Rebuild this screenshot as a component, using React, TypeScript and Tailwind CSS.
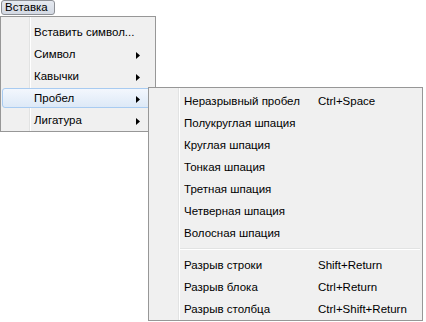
import React from "react";

const font = { fontFamily: '"Liberation Sans", Arial, sans-serif' };

function Arrow() {
  return (
    <svg width="4" height="7" viewBox="0 0 4 7" className="block">
      <path d="M0 0 L4 3.5 L0 7 Z" fill="#000" />
    </svg>
  );
}

type Item = { label: string; sub?: boolean; hover?: boolean };

const main: Item[] = [
  { label: "Вставить символ..." },
  { label: "Символ", sub: true },
  { label: "Кавычки", sub: true },
  { label: "Пробел", sub: true, hover: true },
  { label: "Лигатура", sub: true },
];

const subA: [string, string][] = [
  ["Неразрывный пробел", "Ctrl+Space"],
  ["Полукруглая шпация", ""],
  ["Круглая шпация", ""],
  ["Тонкая шпация", ""],
  ["Третная шпация", ""],
  ["Четверная шпация", ""],
  ["Волосная шпация", ""],
];
const subB: [string, string][] = [
  ["Разрыв строки", "Shift+Return"],
  ["Разрыв блока", "Ctrl+Return"],
  ["Разрыв столбца", "Ctrl+Shift+Return"],
];

export default function App() {
  return (
    <div className="relative w-[426px] h-[322px] bg-white text-[11.5px] text-black overflow-hidden" style={font}>
      <div className="ml-px h-[15px] w-[54px] flex items-center pl-[3px] border border-[#8d9096] rounded-[3px] bg-gradient-to-b from-[#e6eaf1] to-[#d3d9e3] leading-none">
        Вставка
      </div>
      <div className="relative mt-px w-[156px] h-[116px] border border-[#979797] bg-[#f0f0f0] pt-[4px]">
        <div className="absolute left-[28px] top-0 bottom-0 w-px bg-[#e2e3e3]" />
        <div className="absolute left-[29px] top-0 bottom-0 w-px bg-white" />
        {main.map((it) => (
          <div key={it.label} className="relative h-[22px] px-px">
            {it.hover && (
              <div className="absolute left-[1px] right-[1px] top-px bottom-px rounded-[3px] border border-[#a8cbf1] bg-gradient-to-b from-[#f3f7fd] to-[#dde9f7]" />
            )}
            <div className="relative h-full flex items-center pt-[2px] pl-[32px] pr-[14px]">
              <span className="flex-1">{it.label}</span>
              {it.sub && <Arrow />}
            </div>
          </div>
        ))}
      </div>
      <div className="absolute left-[148px] top-[87px] w-[275px] h-[234px] border border-[#979797] bg-[#f0f0f0] pt-[2px]">
        <div className="absolute left-[29px] top-0 bottom-0 w-px bg-[#e2e3e3]" />
        <div className="absolute left-[30px] top-0 bottom-0 w-px bg-white" />
        {subA.map(([a, b]) => (
          <div key={a} className="relative h-[22px] flex items-center pt-[2px] pl-[35px]">
            <span className="w-[134px]">{a}</span>
            <span>{b}</span>
          </div>
        ))}
        <div className="relative h-[10px] pl-[31px] pr-[2px] flex flex-col justify-center">
          <div className="h-px bg-[#e2e3e3]" />
          <div className="h-px bg-white" />
        </div>
        {subB.map(([a, b]) => (
          <div key={a} className="relative h-[22px] flex items-center pt-[2px] pl-[35px]">
            <span className="w-[134px]">{a}</span>
            <span>{b}</span>
          </div>
        ))}
      </div>
    </div>
  );
}
